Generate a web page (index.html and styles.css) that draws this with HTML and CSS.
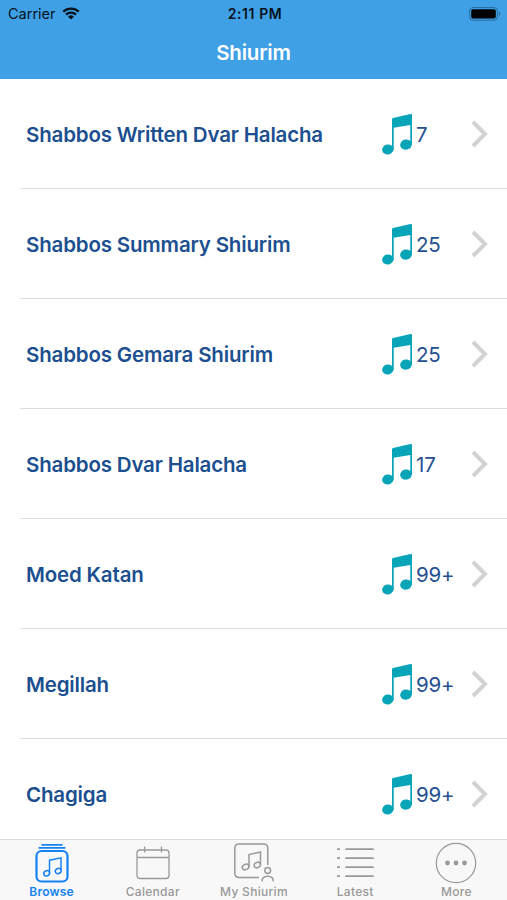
FILE: index.html
```
<!DOCTYPE html>
<html lang="en">
<head>
    <meta charset="UTF-8">
    <meta name="viewport" content="width=device-width, initial-scale=1.0">
    <title>Shiurim</title>
    <link rel="stylesheet" href="styles.css">
</head>
<body>

<!-- Shared row icons -->
<svg class="sprite" aria-hidden="true">
    <symbol id="note" viewBox="0 0 31 42">
        <path d="M10 6.4Q10 5.4 11 5.1L28.5 1.1Q30 .8 30 2V32H28.3V12L11.7 14.8V37H10Z"/>
        <ellipse cx="5.8" cy="36.5" rx="5.7" ry="5" transform="rotate(-12 5.8 36.500)"/>
        <ellipse cx="24" cy="31.6" rx="5.9" ry="5.100" transform="rotate(-12 24 31.600)"/>
    </symbol>
    <symbol id="chevron" viewBox="0 0 17 28">
        <path d="M2 2L14 14L2 26" fill="none" stroke="currentColor" stroke-width="4"/>
    </symbol>
</svg>

<header class="header">
    <div class="status-bar">
        <div class="carrier">
            <span>Carrier</span>
            <svg class="wifi" width="18" height="13" viewBox="0 0 18 13">
                <path d="M1.2 4.7a11.3 11.3 0 0 1 15.6 0M4 7.6a7.2 7.2 0 0 1 10 0" fill="none" stroke="#06131d" stroke-width="2.3"/>
                <path d="M9 12.6L6.1 9.7a4.2 4.2 0 0 1 5.8 0Z" fill="#06131d"/>
            </svg>
        </div>
        <div class="time">2:11 PM</div>
        <svg class="battery" width="33" height="14" viewBox="0 0 33 14">
            <rect x=".6" y=".6" width="27.8" height="12.6" rx="3.4" fill="none" stroke="#286a9b"/>
            <rect x="2.2" y="2.2" width="24.6" height="9.4" rx="1.8"/>
            <path d="M30 4.6q2.4 2.3 0 4.6z" fill="#286a9b"/>
        </svg>
    </div>
    <h1>Shiurim</h1>
</header>

<main class="list">
    <div class="row">
        <span class="title">Shabbos Written Dvar Halacha</span>
        <svg class="note"><use href="#note"/></svg>
        <span class="count">7</span>
        <svg class="chevron"><use href="#chevron"/></svg>
    </div>
    <div class="row">
        <span class="title">Shabbos Summary Shiurim</span>
        <svg class="note"><use href="#note"/></svg>
        <span class="count">25</span>
        <svg class="chevron"><use href="#chevron"/></svg>
    </div>
    <div class="row">
        <span class="title">Shabbos Gemara Shiurim</span>
        <svg class="note"><use href="#note"/></svg>
        <span class="count">25</span>
        <svg class="chevron"><use href="#chevron"/></svg>
    </div>
    <div class="row">
        <span class="title">Shabbos Dvar Halacha</span>
        <svg class="note"><use href="#note"/></svg>
        <span class="count">17</span>
        <svg class="chevron"><use href="#chevron"/></svg>
    </div>
    <div class="row">
        <span class="title">Moed Katan</span>
        <svg class="note"><use href="#note"/></svg>
        <span class="count">99+</span>
        <svg class="chevron"><use href="#chevron"/></svg>
    </div>
    <div class="row">
        <span class="title">Megillah</span>
        <svg class="note"><use href="#note"/></svg>
        <span class="count">99+</span>
        <svg class="chevron"><use href="#chevron"/></svg>
    </div>
    <div class="row">
        <span class="title">Chagiga</span>
        <svg class="note"><use href="#note"/></svg>
        <span class="count">99+</span>
        <svg class="chevron"><use href="#chevron"/></svg>
    </div>
</main>

<nav class="tab-bar">
    <a class="tab active">
        <svg width="42" height="42" viewBox="0 0 42 42">
            <path d="M10.5 2.9h21M7.5 5.9h27" stroke-width="1.8"/>
            <rect x="5.5" y="9" width="31" height="30.5" rx="5" stroke-width="2.2"/>
            <path d="M18.5 31V18.2L30 15.8V28.5"/>
            <ellipse cx="15.7" cy="31.3" rx="3" ry="2.5" transform="rotate(-25 15.7 31.3)"/>
            <ellipse cx="27.2" cy="29" rx="3" ry="2.5" transform="rotate(-25 27.2 29)"/>
        </svg>
        <span>Browse</span>
    </a>
    <a class="tab">
        <svg width="42" height="42" viewBox="0 0 42 42">
            <rect x="5" y="8" width="32" height="28.5" rx="3" stroke-width="1.3"/>
            <path d="M5 15.5h32M12.7 4.5v6M29.5 4.5v6" stroke-width="1.3"/>
        </svg>
        <span>Calendar</span>
    </a>
    <a class="tab">
        <svg width="42" height="42" viewBox="0 0 42 42">
            <path d="M26 35.5H6Q1.8 35.5 1.8 31.3V6.2Q1.8 2 6 2H30.6Q34.8 2 34.8 6.2V23"/>
            <path d="M16 24.5V12.5L27.5 10V22.5"/>
            <ellipse cx="12.6" cy="25" rx="3.4" ry="2.6" transform="rotate(-25 12.6 25)"/>
            <ellipse cx="24.3" cy="23" rx="3.2" ry="2.6" transform="rotate(-25 24.3 23)"/>
            <circle cx="34.7" cy="28.5" r="2.9"/>
            <path d="M29 39.5Q29 34.2 34.7 34.2T40.4 39.5"/>
        </svg>
        <span>My Shiurim</span>
    </a>
    <a class="tab">
        <svg width="42" height="42" viewBox="0 0 42 42">
            <path d="M3 7.2h3M3 16.2h3M3 25.2h3M3 34.2h3" stroke-width="1.7"/>
            <path d="M12 7.2h27M12 16.2h27M12 25.2h27M12 34.2h27" stroke-width="1.7" stroke-linecap="round"/>
        </svg>
        <span>Latest</span>
    </a>
    <a class="tab">
        <svg width="42" height="42" viewBox="0 0 42 42">
            <circle cx="21" cy="21" r="19.7" stroke-width="1.2"/>
            <g fill="currentColor" stroke="none">
                <circle cx="12.5" cy="21" r="2.4"/>
                <circle cx="21" cy="21" r="2.4"/>
                <circle cx="29.5" cy="21" r="2.4"/>
            </g>
        </svg>
        <span>More</span>
    </a>
</nav>

</body>
</html>
```
FILE: styles.css
```
/* Global reset */
* {
    margin: 0;
    padding: 0;
    box-sizing: border-box;
}

body {
    font-family: Inter, "Liberation Sans", sans-serif;
    background-color: #fff;
    height: 100vh;
    display: flex;
    flex-direction: column;
    overflow: hidden;
}

svg {
    display: block;
    flex-shrink: 0;
}

.sprite {
    display: none;
}

/* Header */
.header {
    height: 79px;
    flex-shrink: 0;
    background-color: #40a0e6;
}

.status-bar {
    display: grid;
    grid-template-columns: 1fr auto 1fr;
    align-items: center;
    height: 27px;
    padding: 0 5px 0 8px;
    color: #06131d;
}

.carrier {
    display: flex;
    align-items: center;
    gap: 6px;
    font-size: 14.5px;
}

.time {
    font-size: 14px;
    font-weight: 600;
    letter-spacing: 0.6px;
}

.battery {
    justify-self: end;
}

h1 {
    color: #fff;
    font-size: 20.5px;
    font-weight: 600;
    letter-spacing: -0.2px;
    line-height: 51px;
    text-align: center;
}

/* Shiurim list */
.list {
    flex: 1;
    min-height: 0;
    overflow: hidden;
}

.row {
    display: flex;
    align-items: center;
    height: 110px;
    margin-left: 20px;
    padding: 1px 19px 0 6px;
    border-bottom: 1px solid #dedede;
}

.title {
    flex: 1;
    color: #1b4f8f;
    font-size: 20.5px;
    font-weight: 600;
    letter-spacing: -0.17px;
}

.note {
    width: 31px;
    height: 42px;
    fill: #08a5b9;
}

.count {
    width: 58px;
    padding-left: 3px;
    color: #254f91;
    font-size: 20.5px;
    letter-spacing: -0.2px;
}

.chevron {
    width: 17px;
    height: 28px;
    color: #d2d2d2;
}

/* Bottom tabs */
.tab-bar {
    display: grid;
    grid-template-columns: repeat(5, 1fr);
    height: 61px;
    flex-shrink: 0;
    padding-left: 1px;
    background-color: #f8f8f8;
    border-top: 1px solid #dcdcdc;
}

.tab {
    display: flex;
    flex-direction: column;
    align-items: center;
    padding-top: 2px;
    color: #999;
    font-size: 12px;
    font-weight: 500;
    line-height: 15px;
    letter-spacing: 0.3px;
}

.tab svg {
    fill: none;
    stroke: currentColor;
    stroke-width: 1.5;
}

.tab.active {
    color: #1482f5;
    font-weight: 600;
    letter-spacing: 0.2px;
}
```
